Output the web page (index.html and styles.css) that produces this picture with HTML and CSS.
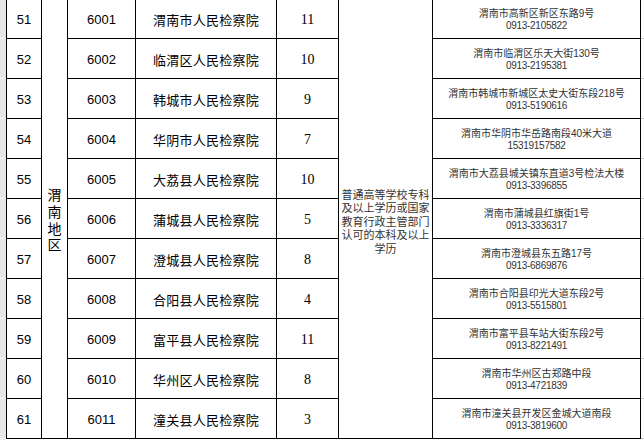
FILE: index.html
```html
<!DOCTYPE html>
<html lang="zh-CN">
<head>
<meta charset="utf-8">
<title>渭南地区检察院招录表</title>
<link rel="stylesheet" href="styles.css">
</head>
<body>
<div class="sheet">
  <div class="gutter-left"></div>
  <div class="grid">
    <div class="cell c-region"><span class="region-text">渭南地区</span></div>
    <div class="cell c-req"><p class="req-text">普通高等学校专科及以上学历或国家教育行政主管部门认可的本科及以上学历</p></div>

    <div class="cell c-idx">51</div><div class="cell c-code">6001</div><div class="cell c-name">渭南市人民检察院</div><div class="cell c-num">11</div><div class="cell c-addr"><div class="addr"><span class="addr-line">渭南市高新区新区东路9号</span><span class="addr-line tel">0913-2105822</span></div></div>
    <div class="cell c-idx">52</div><div class="cell c-code">6002</div><div class="cell c-name">临渭区人民检察院</div><div class="cell c-num">10</div><div class="cell c-addr"><div class="addr"><span class="addr-line">渭南市临渭区乐天大街130号</span><span class="addr-line tel">0913-2195381</span></div></div>
    <div class="cell c-idx">53</div><div class="cell c-code">6003</div><div class="cell c-name">韩城市人民检察院</div><div class="cell c-num">9</div><div class="cell c-addr"><div class="addr"><span class="addr-line">渭南市韩城市新城区太史大街东段218号</span><span class="addr-line tel">0913-5190616</span></div></div>
    <div class="cell c-idx">54</div><div class="cell c-code">6004</div><div class="cell c-name">华阴市人民检察院</div><div class="cell c-num">7</div><div class="cell c-addr"><div class="addr"><span class="addr-line">渭南市华阴市华岳路南段40米大道</span><span class="addr-line tel">15319157582</span></div></div>
    <div class="cell c-idx">55</div><div class="cell c-code">6005</div><div class="cell c-name">大荔县人民检察院</div><div class="cell c-num">10</div><div class="cell c-addr"><div class="addr"><span class="addr-line">渭南市大荔县城关镇东直道3号检法大楼</span><span class="addr-line tel">0913-3396855</span></div></div>
    <div class="cell c-idx">56</div><div class="cell c-code">6006</div><div class="cell c-name">蒲城县人民检察院</div><div class="cell c-num">5</div><div class="cell c-addr"><div class="addr"><span class="addr-line">渭南市蒲城县红旗街1号</span><span class="addr-line tel">0913-3336317</span></div></div>
    <div class="cell c-idx">57</div><div class="cell c-code">6007</div><div class="cell c-name">澄城县人民检察院</div><div class="cell c-num">8</div><div class="cell c-addr"><div class="addr"><span class="addr-line">渭南市澄城县东五路17号</span><span class="addr-line tel">0913-6869876</span></div></div>
    <div class="cell c-idx">58</div><div class="cell c-code">6008</div><div class="cell c-name">合阳县人民检察院</div><div class="cell c-num">4</div><div class="cell c-addr"><div class="addr"><span class="addr-line">渭南市合阳县印光大道东段2号</span><span class="addr-line tel">0913-5515801</span></div></div>
    <div class="cell c-idx">59</div><div class="cell c-code">6009</div><div class="cell c-name">富平县人民检察院</div><div class="cell c-num">11</div><div class="cell c-addr"><div class="addr"><span class="addr-line">渭南市富平县车站大街东段2号</span><span class="addr-line tel">0913-8221491</span></div></div>
    <div class="cell c-idx">60</div><div class="cell c-code">6010</div><div class="cell c-name">华州区人民检察院</div><div class="cell c-num">8</div><div class="cell c-addr"><div class="addr"><span class="addr-line">渭南市华州区古郑路中段</span><span class="addr-line tel">0913-4721839</span></div></div>
    <div class="cell c-idx">61</div><div class="cell c-code">6011</div><div class="cell c-name">潼关县人民检察院</div><div class="cell c-num">3</div><div class="cell c-addr"><div class="addr"><span class="addr-line">渭南市潼关县开发区金城大道南段</span><span class="addr-line tel">0913-3819600</span></div></div>
  </div>
  <div class="gutter-right"></div>
</div>
</body>
</html>
```

FILE: styles.css
```css
html, body {
  margin: 0;
  padding: 0;
  background: #ffffff;
  overflow: hidden;
}

.sheet {
  display: flex;
  align-items: flex-start;
  width: 644px;
  height: 440px;
  overflow: hidden;
}

.gutter-left {
  flex: 0 0 6px;
  height: 440px;
  background-color: #e6e6e6;
  background-image: repeating-linear-gradient(180deg, transparent 0 38px, #f6f6f6 38px 39px, transparent 39px 40px);
}

.gutter-right {
  flex: 0 0 4px;
  height: 440px;
  background-image: repeating-linear-gradient(180deg, transparent 0 38px, #c8c8c8 38px 39px, transparent 39px 40px);
}

.grid {
  flex: 0 0 auto;
  margin-top: -2px;
  display: grid;
  grid-template-columns: 35px 26px 68px 141px 62px 94px 208px;
  grid-auto-rows: 40px;
  border-left: 1px solid #000;
  border-top: 1px solid #000;
}

.cell {
  box-sizing: border-box;
  border-right: 1px solid #000;
  border-bottom: 1px solid #000;
  display: flex;
  align-items: center;
  justify-content: center;
  text-align: center;
  color: #000;
  overflow: hidden;
}

.c-idx {
  grid-column: 1;
  font-family: "Liberation Sans", Arial, sans-serif;
  font-size: 13px;
  padding-top: 2px;
}

.c-region {
  grid-column: 2;
  grid-row: 1 / span 11;
}

.region-text {
  writing-mode: vertical-rl;
  text-orientation: upright;
  font-family: "Noto Sans CJK SC", sans-serif;
  font-size: 14px;
  letter-spacing: 2.7px;
  line-height: 1;
  padding-top: 6px;
}

.c-code {
  grid-column: 3;
  font-family: "Liberation Sans", Arial, sans-serif;
  font-size: 13px;
  padding-top: 2px;
}

.c-name {
  grid-column: 4;
  font-family: "Noto Sans CJK SC", sans-serif;
  font-size: 13px;
  letter-spacing: 0.25px;
  padding-top: 1px;
}

.c-num {
  grid-column: 5;
  font-family: "Liberation Serif", "Times New Roman", serif;
  font-size: 14px;
  padding-top: 2px;
}

.c-req {
  grid-column: 6;
  grid-row: 1 / span 11;
  padding: 6px 2px 0;
}

.req-text {
  margin: 0;
  font-family: "Noto Sans CJK SC", sans-serif;
  font-size: 11px;
  line-height: 13.5px;
  color: #333;
}

.c-addr {
  grid-column: 7;
  padding-top: 2px;
}

.addr {
  display: flex;
  flex-direction: column;
  align-items: center;
  gap: 0;
}

.addr-line {
  display: block;
  height: 12px;
  font-family: "Liberation Sans", "Noto Sans CJK SC", sans-serif;
  font-size: 10px;
  line-height: 12px;
  color: #333;
  white-space: nowrap;
}

.tel {
  letter-spacing: -0.3px;
}
```
